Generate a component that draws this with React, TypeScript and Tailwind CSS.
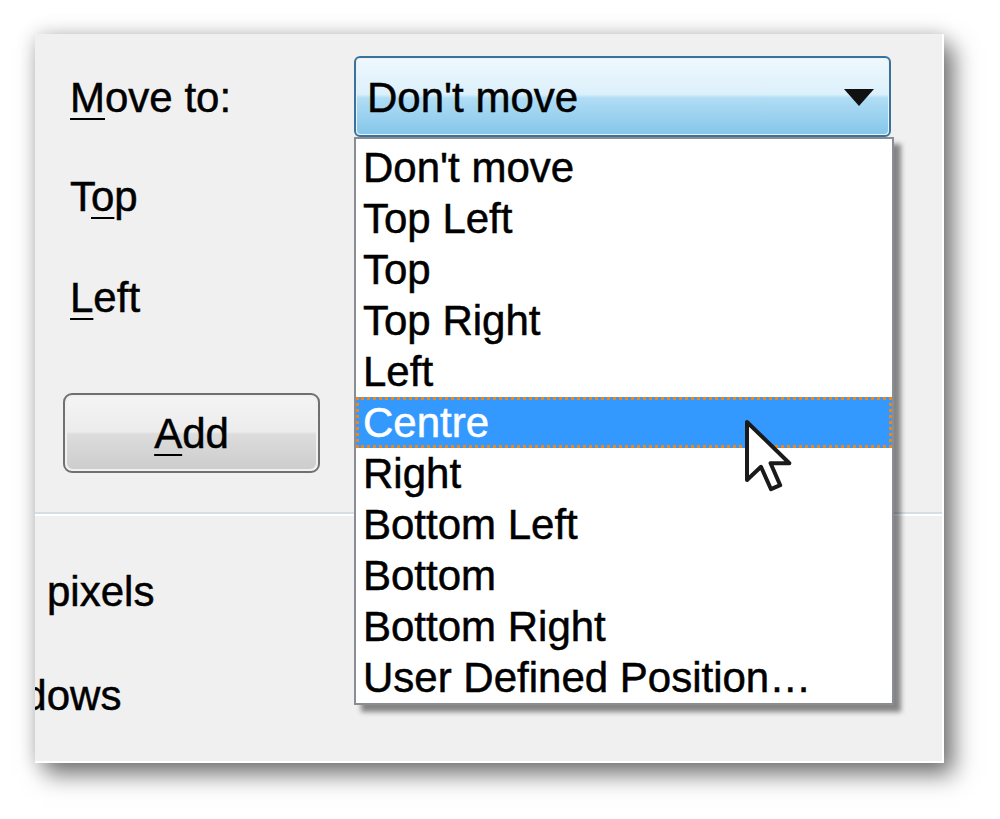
import React from "react";

const items = [
  "Don't move",
  "Top Left",
  "Top",
  "Top Right",
  "Left",
  "Centre",
  "Right",
  "Bottom Left",
  "Bottom",
  "Bottom Right",
  "User Defined Position…",
];

function Cursor() {
  return (
    <svg width="52" height="76" viewBox="0 0 13 19" className="absolute left-[743px] top-[418px]">
      <path
        d="M1 1 L1 15.5 L4.5 12.2 L7 17.8 L9.3 16.8 L6.9 11.3 L11.6 11.3 Z"
        fill="#ffffff"
        stroke="#1a1a1a"
        strokeWidth="1"
        strokeLinejoin="round"
      />
    </svg>
  );
}

const txt = "text-[42px] [-webkit-text-stroke:0.5px_currentColor]";

export default function App() {
  return (
    <div
      className="relative w-[1000px] h-[819px] overflow-hidden bg-white text-black"
      style={{ fontFamily: '"Liberation Sans", Arial, sans-serif' }}
    >
      <div className="pt-[34px] pl-[35px]">
        <div className="relative w-[909px] h-[729px] overflow-hidden bg-[#f0f0f0] border-r-2 border-b-2 border-white shadow-[0_0_18px_rgba(0,0,0,0.18),10px_12px_22px_rgba(0,0,0,0.5)]">
          <div className="flex">
            {/* left column */}
            <div className="flex flex-col w-[319px]">
              <div className={`pl-[35px] pt-[40px] h-[88px] leading-[48px] ${txt}`}>
                <span className="underline decoration-2 underline-offset-[6px]">M</span>ove to:
              </div>
              <div className={`pl-[35px] mt-[51px] h-[48px] leading-[48px] ${txt}`}>
                T<span className="underline decoration-2 underline-offset-[6px]">o</span>p
              </div>
              <div className={`pl-[35px] mt-[53px] h-[48px] leading-[48px] ${txt}`}>
                <span className="underline decoration-2 underline-offset-[6px]">L</span>eft
              </div>
              <div className="ml-[28px] mt-[71px] w-[257px] h-[80px] rounded-[9px] border-2 border-[#707070] p-[2px]">
                <div className={`h-full w-full rounded-[6px] bg-[linear-gradient(to_bottom,#f4f4f4_0%,#ececec_48%,#dcdcdc_52%,#cdcdcd_100%)] flex items-center justify-center ${txt}`}>
                  <span>
                    <span className="underline decoration-2 underline-offset-[6px]">A</span>dd
                  </span>
                </div>
              </div>
            </div>
            {/* combobox */}
            <div className="pt-[22px]">
              <div className="w-[537px] h-[81px] rounded-[6px] border-2 border-[#36739f] p-[1px]">
                <div className="h-full w-full rounded-[4px] bg-[linear-gradient(to_bottom,#eef8fd_0%,#dcf0fb_47%,#b0ddf5_52%,#86c6ea_100%)] flex items-center pl-[10px] pr-[14px]">
                  <span className={`flex-1 leading-none pt-[2px] ${txt}`}>Don't move</span>
                  <svg width="30" height="17" viewBox="0 0 30 17" className="mt-[2px]">
                    <path d="M0 0 L30 0 L15 17 Z" fill="#111" />
                  </svg>
                </div>
              </div>
            </div>
          </div>
          {/* separator */}
          <div className="mt-[39px] h-[2px] bg-[#d3dee5]" />
          <div className="h-[2px] bg-white" />
          <div className={`pl-[12px] mt-[52px] h-[48px] leading-[48px] ${txt}`}>pixels</div>
          <div className={`ml-[-84px] mt-[56px] h-[48px] leading-[48px] ${txt}`}>Windows</div>
        </div>
      </div>

      {/* dropdown list */}
      <div className="absolute left-[354px] top-[137px] w-[540px] h-[568px] bg-white border-2 border-[#8a8e94] shadow-[7px_7px_5px_rgba(0,0,0,0.45)] pt-[3px]">
        {items.map((it) => {
          const sel = it === "Centre";
          return (
            <div
              key={it}
              className={
                sel
                  ? `h-[51px] flex items-center pl-[4px] bg-[#3399ff] text-white border-[3px] border-dotted border-[#f5850f] leading-none ${txt}`
                  : `h-[51px] flex items-center pl-[7px] leading-none ${txt}`
              }
            >
              {it}
            </div>
          );
        })}
      </div>

      <Cursor />
    </div>
  );
}
